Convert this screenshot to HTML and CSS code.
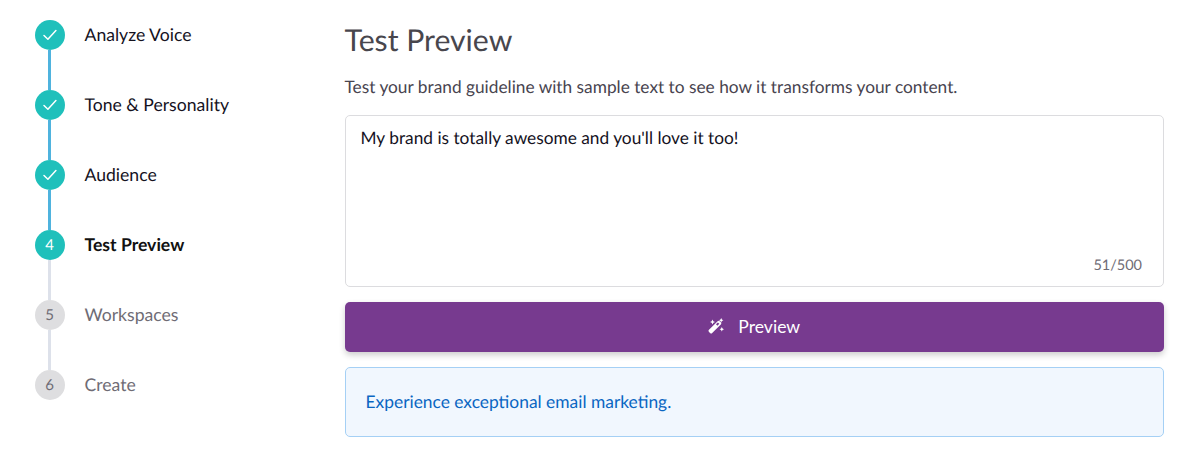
FILE: index.html
```html
<!DOCTYPE html>
<html lang="en">
<head>
    <meta charset="UTF-8">
    <meta name="viewport" content="width=device-width, initial-scale=1.0">
    <title>Test Preview</title>
    <link rel="stylesheet" href="styles.css">
</head>
<body>

<div class="wizard">
    <ol class="steps">
        <li class="step done">
            <span class="step-dot">
                <svg width="16" height="16" viewBox="0 0 16 16"><path d="M2 8.5l3.9 3.7 8-8.6" fill="none" stroke="#fff" stroke-width="1.5" stroke-linecap="round" stroke-linejoin="round"/></svg>
            </span>
            <span class="step-name">Analyze Voice</span>
        </li>
        <li class="step done">
            <span class="step-dot">
                <svg width="16" height="16" viewBox="0 0 16 16"><path d="M2 8.5l3.9 3.7 8-8.6" fill="none" stroke="#fff" stroke-width="1.5" stroke-linecap="round" stroke-linejoin="round"/></svg>
            </span>
            <span class="step-name">Tone &amp; Personality</span>
        </li>
        <li class="step done">
            <span class="step-dot">
                <svg width="16" height="16" viewBox="0 0 16 16"><path d="M2 8.5l3.9 3.7 8-8.6" fill="none" stroke="#fff" stroke-width="1.5" stroke-linecap="round" stroke-linejoin="round"/></svg>
            </span>
            <span class="step-name">Audience</span>
        </li>
        <li class="step active">
            <span class="step-dot">4</span>
            <span class="step-name">Test Preview</span>
        </li>
        <li class="step">
            <span class="step-dot">5</span>
            <span class="step-name">Workspaces</span>
        </li>
        <li class="step">
            <span class="step-dot">6</span>
            <span class="step-name">Create</span>
        </li>
    </ol>

    <div class="content">
        <h1>Test Preview</h1>
        <p class="intro">Test your brand guideline with sample text to see how it transforms your content.</p>
        <div class="sample-box">
            <div class="sample-text">My brand is totally awesome and you'll love it too!</div>
            <div class="counter">51/500</div>
        </div>
        <button type="button" class="preview-btn">
            <svg width="16" height="16" viewBox="0 0 16 16" fill="#fff">
                <path d="M1 11.8L9.6 3.2a1.5 1.5 0 0 1 2.1 0l1.1 1.1a1.5 1.5 0 0 1 0 2.1L4.200 15a1.500 1.500 0 0 1-2.100 0L1 13.900a1.500 1.500 0 0 1 0-2.100z"/>
                <path d="M4.500 1.500l.8 1.700 1.700.8-1.700.8-.8 1.700-.8-1.700L2 4l1.700-.8zM13.200 0l.7 1.500 1.500.7-1.500.7-.7 1.500-.7-1.500-1.500-.7 1.500-.7zM13.800 9l.7 1.500 1.500.7-1.500.7-.7 1.500-.7-1.500-1.500-.7 1.500-.7z"/>
                <path d="M8 6.300l1.900-1.900 1.400 1.400-1.900 1.900z" fill="#773a8f"/>
            </svg>
            <span>Preview</span>
        </button>
        <div class="result">Experience exceptional email marketing.</div>
    </div>
</div>

</body>
</html>
```

FILE: styles.css
```css
body {
    font-family: 'Lato', sans-serif;
    background: #fff;
    color: #000;
    margin: 0;
    overflow: hidden;
    text-rendering: geometricPrecision;
}
.wizard {
    display: flex;
    padding: 15px 36px 0 34.5px;
}

/* left side steps */
.steps {
    list-style: none;
    margin: 5px 0 0;
    padding: 0;
    width: 310px;
    flex-shrink: 0;
}
.step {
    display: flex;
    align-items: flex-start;
    gap: 20px;
    height: 70px;
    position: relative;
    font-size: 17.6px;
    color: #6f6c75;
}
.step:last-child {
    height: 40px;
}
.step::after {
    content: "";
    position: absolute;
    left: 13.5px;
    top: 30px;
    width: 2.5px;
    height: 40px;
    background: #dde1ea;
}
.step:last-child::after {
    display: none;
}
.step.done::after {
    background: #4fb3de;
}
.step-dot {
    width: 30px;
    height: 30px;
    border-radius: 50%;
    background: #dedee0;
    color: #6f6c75;
    font-size: 15px;
    display: flex;
    align-items: center;
    justify-content: center;
    flex-shrink: 0;
}
.step.done .step-dot, .step.active .step-dot {
    background: #1fc0bb;
    color: #fff;
}
.step-name {
    line-height: 40px;
    margin-top: -5px;
}
.step.done .step-name {
    color: #15121e;
}
.step.active .step-name {
    color: #111;
    font-weight: 700;
}

/* right side */
.content {
    flex: 1;
}
.content h1 {
    font-size: 30.2px;
    font-weight: 400;
    line-height: 50px;
    color: #48464d;
    margin: 0 0 7px;
}
.intro {
    font-size: 17.3px;
    line-height: 30px;
    color: #48444f;
    margin: 0 0 13px;
}
.sample-box {
    height: 172px;
    box-sizing: border-box;
    border: 1px solid #dcdcdf;
    border-radius: 5px;
    padding: 9px 21px 10px 15px;
    display: flex;
    flex-direction: column;
    justify-content: space-between;
}
.sample-text {
    font-size: 17.3px;
    line-height: 26px;
    color: #15121e;
}
.counter {
    font-size: 14.5px;
    line-height: 20px;
    color: #6f6c75;
    text-align: right;
}
.preview-btn {
    display: flex;
    align-items: center;
    justify-content: center;
    gap: 14px;
    width: 100%;
    height: 50px;
    margin: 15px 0;
    padding: 0 0 2px;
    border: none;
    border-radius: 5px;
    background: #773a8f;
    color: #fff;
    font-family: inherit;
    font-size: 17.6px;
    box-shadow: 0 3px 6px rgba(0, 0, 0, 0.2);
}
.result {
    height: 70px;
    box-sizing: border-box;
    border: 1px solid #a5d0f5;
    border-radius: 5px;
    background: #f1f7fe;
    color: #0a66c2;
    font-size: 17.4px;
    line-height: 68px;
    padding: 0 20px;
}
```
